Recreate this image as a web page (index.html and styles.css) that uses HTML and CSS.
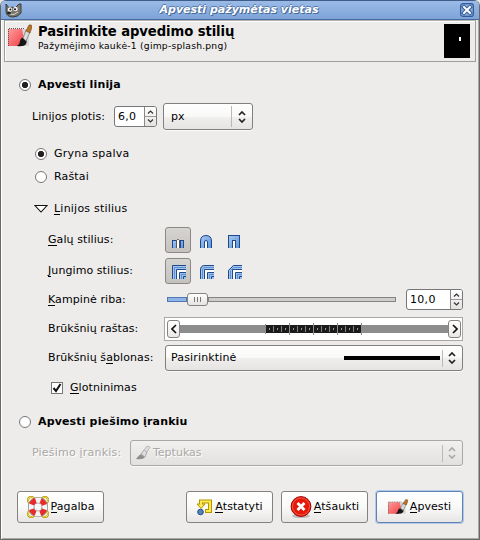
FILE: index.html
```html
<!DOCTYPE html>
<html lang="lt">
<head>
<meta charset="utf-8">
<title>Apvesti pažymėtas vietas</title>
<link rel="stylesheet" href="styles.css">
</head>
<body>
<svg class="defs" width="0" height="0">
  <defs>
    <linearGradient id="red" x1="0" y1="0" x2="1" y2="1"><stop offset="0" stop-color="#ff9c9c"/><stop offset="1" stop-color="#f23f45"/></linearGradient>
    <linearGradient id="blue" x1="0" y1="0" x2="1" y2="1"><stop offset="0" stop-color="#a9c9ef"/><stop offset="1" stop-color="#5b93dc"/></linearGradient>
    <symbol id="stroke" viewBox="0 0 24 24">
      <path d="M0 5H21V22H0z" fill="#d8d6d4"/>
      <path d="M0 5H14L16 15L12 22H0z" fill="url(#red)"/>
      <path d="M0.500 22V4.500H16" fill="none" stroke="#555" stroke-dasharray="1 1"/>
      <path d="M9 22Q12 20 12 17Q13 13 16 14Q20 16 18 20Q16 23 9 22z" fill="#161616"/>
      <path d="M15 14L18 6L22 8L18 17z" fill="#dcdcd6" stroke="#777" stroke-width=".8"/>
      <path d="M18 7L21 1Q24 0 24 3L22 9z" fill="#b87325" stroke="#6d4a22" stroke-width=".6"/>
    </symbol>
    <symbol id="updown" viewBox="0 0 8 12"><path d="M1 4L4 1L7 4M1 8L4 11L7 8" fill="none" stroke="currentColor" stroke-width="1.7"/></symbol>
    <symbol id="spinners" viewBox="0 0 11 19"><path d="M0 9.500H11" stroke="#999"/><path d="M3 6.500L5.500 4L8 6.500M3 12.500L5.500 15L8 12.500" fill="none" stroke="#333" stroke-width="1.200"/></symbol>
    <symbol id="join-inner" viewBox="0 0 16 16"><path d="M7 15V6H16V15z" fill="#fff"/><path d="M10 15V9H16V15z" fill="#9cbfea"/><path d="M6.500 15V5.500H16M9.500 15V8.500H16M13.500 15V12.500H16" fill="none" stroke="#204a87"/><path d="M11.500 15V10.500H16" fill="none" stroke="#5b8fd6"/></symbol>
  </defs>
</svg>
<main class="window">
  <header class="titlebar">
    <svg class="wilber" width="17" height="15" viewBox="0 0 17 15">
      <path d="M1 1L4 5L7 4L10 5L14 1L16 1V10Q13 14 8 14Q2 14 1 9z" fill="#77756c" stroke="#33332e" stroke-width=".9"/>
      <circle cx="5" cy="6.500" r="2.200" fill="#fff"/><circle cx="10.500" cy="6" r="2.300" fill="#eee"/>
      <circle cx="5.400" cy="6.500" r="1" fill="#111"/><circle cx="10" cy="6.300" r="1" fill="#111"/>
      <path d="M5 11Q9 13 13 9" stroke="#d5d2c5" fill="none"/><ellipse cx="4" cy="10" rx="2" ry="1.300" fill="#222"/>
    </svg>
    <h1>Apvesti pažymėtas vietas</h1>
    <svg class="close" width="14" height="14" viewBox="0 0 14 14"><rect x=".6" y=".6" width="12.800" height="12.800" rx="2.500" fill="#86aadb" stroke="#315c98" stroke-width="1.200"/><path d="M4 4L10 10M10 4L4 10" stroke="#315c98" stroke-width="4" stroke-linecap="square"/><path d="M4 4L10 10M10 4L4 10" stroke="#fff" stroke-width="2" stroke-linecap="square"/></svg>
  </header>
  <section class="banner">
    <svg width="24" height="24"><use href="#stroke"/></svg>
    <div class="banner-text"><h2>Pasirinkite apvedimo stilių</h2><p>Pažymėjimo kaukė-1 (gimp-splash.png)</p></div>
    <div class="preview"><i></i></div>
  </section>
  <section class="content">
    <div class="row main-option"><span class="radio on"></span><b class="t-line">Apvesti linija</b></div>
    <div class="row width-row"><span class="t-width">Linijos plotis:</span>
      <div class="spin spin-small"><span>6,0</span><svg class="arrows" width="11" height="19"><use href="#spinners"/></svg></div>
      <div class="combo unit"><span>px</span><i class="sep"></i><svg class="ud" width="8" height="12"><use href="#updown"/></svg></div>
    </div>
    <div class="row sub solid"><span class="radio on"></span><span class="t-solid">Gryna spalva</span></div>
    <div class="row sub"><span class="radio"></span><span class="t-pattern">Raštai</span></div>
    <div class="row expander"><svg width="14" height="9" viewBox="0 0 14 9"><path d="M1 1.500H13L7 8z" fill="#fff" stroke="#111" stroke-width="1.100"/></svg><span><u>L</u>inijos stilius</span></div>
    <div class="row caps"><label><u>G</u>alų stilius:</label>
      <div class="toggle on"><svg width="16" height="16" shape-rendering="crispEdges"><path d="M2.500 15V7.500H6V15M13.500 15V7.500H10V15" fill="url(#blue)" stroke="#204a87"/><path d="M6 15V7H10V15z" fill="#fff"/><path d="M6.500 15V7M9.500 15V7" stroke="#555"/><path d="M7 6.500H9" stroke="#777"/></svg></div>
      <div class="toggle"><svg width="16" height="16"><path d="M2.500 15V8Q2.500 2.500 8 2.500Q13.500 2.500 13.500 8V15" fill="url(#blue)" stroke="#204a87"/><path d="M6.500 15V9Q6.500 7.500 8 7.500Q9.500 7.500 9.500 9V15" fill="#fff" stroke="#204a87"/></svg></div>
      <div class="toggle"><svg width="16" height="16" shape-rendering="crispEdges"><path d="M2.500 15V2.500H13.500V15" fill="url(#blue)" stroke="#204a87"/><path d="M6.500 15V7.500H9.500V15" fill="#fff" stroke="#204a87"/></svg></div>
    </div>
    <div class="row joins"><label><u>J</u>ungimo stilius:</label>
      <div class="toggle on"><svg width="16" height="16"><path d="M2 15V1H16V6H7V15z" fill="#a4c5ed"/><path d="M2.500 15V1.500H16" fill="none" stroke="#204a87"/><path d="M4.500 15V3.500H16" fill="none" stroke="#5b8fd6"/><use href="#join-inner"/></svg></div>
      <div class="toggle"><svg width="16" height="16"><path d="M2 15V6Q2 1 7 1H16V6H7V15z" fill="#a4c5ed"/><path d="M2.500 15V6Q2.500 1.500 7 1.500H16" fill="none" stroke="#204a87"/><path d="M4.500 15V6Q4.500 3.500 7 3.500H16" fill="none" stroke="#5b8fd6"/><use href="#join-inner"/></svg></div>
      <div class="toggle"><svg width="16" height="16"><path d="M2 15V6L7 1H16V6H7V15z" fill="#a4c5ed"/><path d="M2.500 15V6.500L7.500 1.500H16" fill="none" stroke="#204a87"/><path d="M4.500 15V6.500L7.500 3.500H16" fill="none" stroke="#5b8fd6"/><use href="#join-inner"/></svg></div>
    </div>
    <div class="row miter"><label><u>K</u>ampinė riba:</label>
      <div class="slider"><i class="filled"></i><i class="knob"><b></b><b></b><b></b></i><i class="rest"></i></div>
      <div class="spin spin-large"><span>10,0</span><svg class="arrows" width="11" height="19"><use href="#spinners"/></svg></div>
    </div>
    <div class="row dash"><label>Brūkšnių raštas:</label>
      <div class="pattern"><div class="pbtn"><svg width="6" height="10" viewBox="0 0 6 10"><path d="M5 1L1 5L5 9"/></svg></div>
        <svg class="track" width="268" height="22" shape-rendering="crispEdges"><path d="M0 7H268V15H0z" fill="#8c8c8c"/><path d="M86 7H182V15H86z" fill="#1b1b1b"/><path d="M89 11H182" stroke="#999" stroke-width="2" stroke-dasharray="1 7"/><path d="M93 11H181" stroke="#858585" stroke-width="6" stroke-dasharray="1 7"/><path d="M85.500 6V16M109.500 5V17M133.500 5V17M157.500 5V17M181.500 5V17" stroke="#8c8c8c"/></svg>
        <div class="pbtn"><svg width="6" height="10" viewBox="0 0 6 10"><path d="M1 1L5 5L1 9"/></svg></div></div>
    </div>
    <div class="row preset"><label>Brūkšnių š<u>a</u>blonas:</label>
      <div class="combo"><span class="t-custom">Pasirinktinė</span><i class="line"></i><i class="sep"></i><svg class="ud" width="8" height="12"><use href="#updown"/></svg></div></div>
    <div class="row smooth"><span class="check"><svg width="10" height="10" viewBox="0 0 10 10"><path d="M1.500 5L4 8L8.500 1" fill="none" stroke="#111" stroke-width="2"/></svg></span><span class="t-smooth"><u>G</u>lotninimas</span></div>
    <div class="row main-option tool-option"><span class="radio"></span><b class="t-line">Apvesti piešimo įrankiu</b></div>
    <div class="row tool"><span class="t-toollabel">Piešimo įrankis:</span>
      <div class="combo disabled"><svg width="16" height="16" viewBox="0 0 16 16"><path d="M1 14Q4 10 6 9L10 12Q8 15 1 14z" fill="#8e8e8e"/><path d="M6 9L9 5L12 7L10 12z" fill="#dedede" stroke="#aaa"/><path d="M9 5L12 1L15 2L12 7z" fill="#ddd" stroke="#bbb"/></svg><span>Teptukas</span><i class="sep"></i><svg class="ud" width="8" height="12"><use href="#updown"/></svg></div></div>
    <footer class="buttons">
      <div class="button help"><svg width="22" height="22" viewBox="0 0 24 24"><g fill="none" stroke="#a88b00" stroke-width="2"><circle cx="4.500" cy="4.500" r="3.400"/><circle cx="19.500" cy="4.500" r="3.400"/><circle cx="4.500" cy="19.500" r="3.400"/><circle cx="19.500" cy="19.500" r="3.400"/></g><g fill="none" stroke="#fce94f"><circle cx="4.500" cy="4.500" r="3.400"/><circle cx="19.500" cy="4.500" r="3.400"/><circle cx="4.500" cy="19.500" r="3.400"/><circle cx="19.500" cy="19.500" r="3.400"/></g><circle cx="12" cy="12" r="7.500" fill="none" stroke="#777" stroke-width="7"/><circle cx="12" cy="12" r="7.500" fill="none" stroke="#f4f4f4" stroke-width="5.600"/><circle cx="12" cy="12" r="7.500" fill="none" stroke="#e52b2b" stroke-width="5.600" stroke-dasharray="6.500 5.281" stroke-dashoffset="-2.640"/></svg><span><u>P</u>agalba</span></div>
      <div class="button reset"><svg width="17" height="18" viewBox="0 0 17 18"><path d="M5 6V3.500H14V13H9" fill="none" stroke="#b59500" stroke-width="4"/><path d="M1 6H9L5 10.500z" fill="#fce94f" stroke="#b59500"/><path d="M5 7V3.500H14V13H10" fill="none" stroke="#fce94f" stroke-width="2"/><circle cx="4.500" cy="14" r="2.800" fill="#5583bd" stroke="#204a87"/></svg><span><u>A</u>tstatyti</span></div>
      <div class="button cancel"><svg width="22" height="22" viewBox="0 0 22 22"><ellipse cx="11" cy="20" rx="9" ry="2" fill="#bbb"/><circle cx="11" cy="10.500" r="9.900" fill="#e51a0b" stroke="#a40000"/><circle cx="11" cy="10.500" r="8.600" fill="none" stroke="#f56a55" stroke-width=".8"/><path d="M7.500 7L14.500 14M14.500 7L7.500 14" stroke="#fff" stroke-width="2.800"/></svg><span><u>A</u>tšaukti</span></div>
      <div class="button apply"><svg width="20" height="16" viewBox="0 0 24 24" preserveAspectRatio="none"><use href="#stroke" width="24" height="24"/></svg><span><u>A</u>pvesti</span></div>
    </footer>
  </section>
</main>
</body>
</html>
```
FILE: styles.css
```css
* { box-sizing: border-box; }
body { margin: 0; width: 480px; height: 540px; overflow: hidden; background: #e8e8e8; font: 11px/14px "DejaVu Sans", sans-serif; letter-spacing: .08px; color: #000; }
.defs { display: block; height: 0; }
svg { display: block; flex: none; }
h1, h2, p { margin: 0; white-space: nowrap; }
i { display: block; flex: none; }
u { text-decoration: none; box-shadow: inset 0 -1px #000; }
.window { height: 540px; border: solid #6a6767; border-width: 0 1px 1px; background: #edeceb; border-radius: 6px 6px 0 0; overflow: hidden; box-shadow: inset 1px 0 #fff, inset -1px -1px #aaa8a5; }
.titlebar { height: 20px; display: flex; align-items: center; padding: 0 5px 0 4px; background: linear-gradient(#9bbbe7, #7da3d8); border-top: 1px solid #405d89; border-bottom: 1px solid #476b9d; }
.titlebar h1 { flex: 1; text-align: center; padding-right: 4px; font-size: 11px; line-height: 18px; letter-spacing: 0; font-style: italic; font-weight: bold; color: #fff; text-shadow: 1px 1px #47699b, -1px 0 #5479ae, 0 -1px #5479ae; }
.banner { height: 42px; margin: 0 3px; border: 1px solid #a09e9a; border-top-color: #b6b3b0; display: flex; padding: 3px 5px 3px 3px; box-shadow: inset 1px 1px #fff; }
.banner-text { margin-left: 6px; flex: 1; }
.banner h2 { font-size: 13.200px; line-height: 16px; letter-spacing: -.08px; }
.banner p { font-size: 9.200px; line-height: 11px; letter-spacing: .22px; }
.preview { width: 26px; height: 34px; background: #000; padding: 13px 0 0 15px; }
.preview i { width: 2px; height: 4px; background: #fff; }
.content { padding: 11px 16px 0 18px; }
.row { display: flex; align-items: center; white-space: nowrap; height: 23px; }
.main-option { gap: 7px; }
.t-line { letter-spacing: .15px; }
.radio { width: 12px; height: 12px; border: 1px solid #777; border-radius: 50%; background: #fff; flex: none; }
.radio.on { background: radial-gradient(circle, #222 0 2.800px, #fff 3.500px); }
.width-row { height: 27px; margin-top: 7px; padding-left: 13px; }
.t-width { width: 82px; }
.spin { display: flex; height: 21px; border: 1px solid #777; border-radius: 3px; background: #fff; overflow: hidden; }
.spin > span { flex: 1; padding: 3px 3px; letter-spacing: .3px; }
.arrows { width: 12px; padding: 0; border-left: 1px solid #888; background: linear-gradient(#fff, #e4e2e0); }
.spin-small { width: 43px; }
.combo { display: flex; align-items: center; height: 26px; border: 1px solid #82807d; border-radius: 3px; background: linear-gradient(#fff, #f8f8f7 50%, #f0efee 51%, #e6e4e2); box-shadow: 0 1px #f9f9f8; padding: 0 6px 0 5px; }
.combo > span { flex: 1; }
.sep { width: 1px; height: 17px; background: #bbb8b5; margin-right: 5px; }
.ud { color: #222; }
.unit { width: 90px; height: 27px; margin-left: 6px; padding-left: 7px; }
.unit .sep { height: 21px; margin-right: 6px; }
.sub { padding-left: 16px; gap: 7px; }
.solid { margin-top: 12px; }
.t-solid { letter-spacing: .25px; }
.t-pattern { letter-spacing: .15px; }
.expander { margin-top: 9px; padding-left: 15px; gap: 6px; letter-spacing: .22px; }
label { width: 117px; flex: none; }
.caps, .joins, .miter, .dash, .preset { padding-left: 29px; }
.caps { height: 26px; margin-top: 7px; }
.joins { height: 26px; margin-top: 5px; }
.toggle { width: 26px; height: 26px; padding: 6px 5px; margin-right: 2px; flex: none; }
.toggle.on { border: 1px solid #8b8885; border-radius: 3px; background: linear-gradient(#d6d4d1, #c5c2be); padding: 5px 4px; }
.miter { height: 21px; margin-top: 5px; }
.slider { display: flex; align-items: center; padding-left: 2px; width: 231px; }
.filled { width: 20px; height: 5px; border: 1px solid #5278b0; background: #8eb4e8; }
.knob { width: 21px; height: 13px; border: 1px solid #858380; border-radius: 3px; background: linear-gradient(#fff, #e5e3e1); display: flex; gap: 2px; justify-content: center; align-items: center; }
.knob b { width: 1px; height: 5px; background: #777; }
.rest { flex: 1; height: 5px; border: 1px solid #858380; background: #cfcdcb; }
.spin-large { width: 57px; margin-left: 10px; }
.dash { height: 24px; margin-top: 7px; }
.pattern { width: 299px; height: 24px; margin-left: -1px; background: #fff; border: 1px solid #aaa7a4; display: flex; align-items: center; padding: 0 1px 0 2px; }
.pbtn { width: 13px; height: 18px; border: 1px solid #85827f; border-radius: 3px; background: linear-gradient(#fff, #eae8e6); display: grid; place-items: center; flex: none; }
.pbtn svg { fill: none; stroke: #111; stroke-width: 1.600; }
.preset { height: 26px; margin-top: 4px; }
.preset .combo { width: 298px; }
.t-custom { letter-spacing: .15px; }
.line { width: 96px; height: 4px; background: #000; margin-right: 2px; }
.smooth { margin-top: 5px; padding-left: 32px; gap: 7px; }
.check { width: 12px; height: 12px; border: 1px solid #777; background: #fff; flex: none; }
.tool-option { margin-top: 11px; }
.tool { height: 26px; margin-top: 7px; padding-left: 13px; color: #aaa8a5; text-shadow: 1px 1px #fff; }
.t-toollabel { width: 98px; letter-spacing: .2px; }
.disabled { width: 333px; border-color: #aaa8a5; background: linear-gradient(#f1f0ef, #e3e1df); padding-left: 4px; gap: 0; letter-spacing: 0; }
.disabled span { padding-left: 2px; }
.disabled .ud { color: #aaa; }
.buttons { display: flex; margin-top: 25px; margin-left: -2px; }
.button { width: 87px; height: 32px; border: 1px solid #84817e; border-radius: 3px; background: linear-gradient(#fff, #f9f9f8 50%, #e8e6e4); display: flex; align-items: center; justify-content: center; gap: 2px; }
.reset { margin-left: 82px; }
.cancel { margin-left: 8px; }
.apply { margin-left: 8px; border-color: #5d82b8; box-shadow: 0 0 0 1px #b4c9e4; }
```
